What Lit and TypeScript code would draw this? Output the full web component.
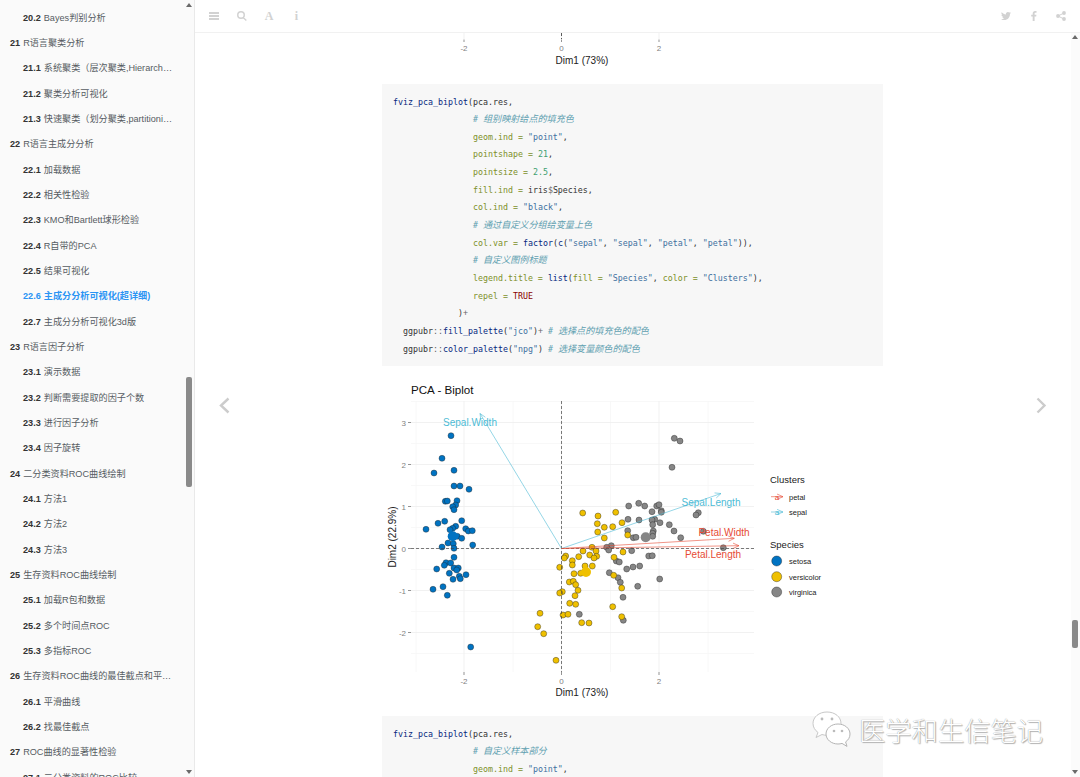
import { LitElement, html, css, svg } from 'lit';
import { customElement } from 'lit/decorators.js';

type Row = [string, string, number];

const toc: Row[] = [
  ['20.2', 'Bayes判别分析', 2],
  ['21', 'R语言聚类分析', 1],
  ['21.1', '系统聚类（层次聚类,Hierarchical clustering）', 2],
  ['21.2', '聚类分析可视化', 2],
  ['21.3', '快速聚类（划分聚类,partitioning clustering）', 2],
  ['22', 'R语言主成分分析', 1],
  ['22.1', '加载数据', 2],
  ['22.2', '相关性检验', 2],
  ['22.3', 'KMO和Bartlett球形检验', 2],
  ['22.4', 'R自带的PCA', 2],
  ['22.5', '结果可视化', 2],
  ['22.6', '主成分分析可视化(超详细)', 2],
  ['22.7', '主成分分析可视化3d版', 2],
  ['23', 'R语言因子分析', 1],
  ['23.1', '演示数据', 2],
  ['23.2', '判断需要提取的因子个数', 2],
  ['23.3', '进行因子分析', 2],
  ['23.4', '因子旋转', 2],
  ['24', '二分类资料ROC曲线绘制', 1],
  ['24.1', '方法1', 2],
  ['24.2', '方法2', 2],
  ['24.3', '方法3', 2],
  ['25', '生存资料ROC曲线绘制', 1],
  ['25.1', '加载R包和数据', 2],
  ['25.2', '多个时间点ROC', 2],
  ['25.3', '多指标ROC', 2],
  ['26', '生存资料ROC曲线的最佳截点和平滑曲线', 1],
  ['26.1', '平滑曲线', 2],
  ['26.2', '找最佳截点', 2],
  ['27', 'ROC曲线的显著性检验', 1],
  ['27.1', '二分类资料的ROC比较', 2],
];

// points read off the plot, in page pixels
const setosa = [
  [451, 435.7], [442, 458.3], [434, 473], [454, 470.3], [454, 486], [460, 486], [469, 489.3],
  [445.3, 501.3], [447.3, 501], [457, 500.7], [455.7, 505], [452.7, 506.7], [454, 509.7],
  [444.7, 521.3], [438, 523.3], [426, 529.3], [461.7, 520.7], [455.7, 526.3], [452.7, 528.3],
  [450, 529.7], [465.7, 528.7], [468.3, 531], [472.3, 530.7], [457.3, 536.3], [461.7, 538.3],
  [448, 543], [453.3, 543.7], [472.7, 545], [442, 547], [454, 548.3], [454, 557.3], [446, 562.7],
  [450.7, 563], [444.3, 565.3], [454, 568], [458.3, 568], [456.7, 570], [436.7, 569], [449.3, 573.3],
  [466, 574.7], [459.3, 576.3], [460.3, 578.7], [453, 579.3], [443, 586.7], [433, 589.3],
  [447.3, 595.3], [470.7, 647],
];
const versicolor = [
  [582.7, 513], [598, 516], [615.7, 512.3], [597.3, 523.7], [604.3, 527.3], [612.7, 526.7],
  [622, 522.7], [597.7, 532], [627.7, 535], [604.3, 538], [592, 547.3], [583, 551], [596, 551],
  [578.7, 556.7], [589.7, 555], [596.7, 556.3], [594, 558], [565.7, 556], [564.3, 558], [614, 557.3],
  [623, 552], [572.3, 560.7], [572.3, 565], [585, 566], [592.3, 566], [559.7, 567.3], [580.7, 573.3],
  [574, 573.7], [613.7, 575.3], [569.3, 582], [573.3, 581.3], [575.7, 584.7], [621.7, 588], [578, 590.3],
  [562.3, 591.7], [559.7, 593], [575, 595.7], [569.7, 603.3], [575.7, 604.3], [612.7, 606.7],
  [540, 613.3], [537.7, 626.7], [543.7, 633.7], [556, 660.3], [563, 615], [568, 614.3], [581.7, 622.7],
  [589, 623], [621.7, 616.7],
];
const virginica = [
  [674.3, 438.3], [680, 441], [672, 467.3], [628.7, 506], [638.7, 503.3], [644.7, 506], [656.7, 506],
  [659, 504.7], [652, 511.7], [661.3, 510.7], [661.3, 512.3], [628, 519.3], [639, 520], [654.7, 519.3],
  [652, 520], [660, 522.7], [652.7, 524.7], [669.3, 524.7], [698.3, 512.7], [696, 515], [627.7, 530.7],
  [674, 531], [653.3, 531], [652.7, 533.3], [703.3, 531.3], [633.3, 537.7], [636, 537.3], [652.7, 536.3],
  [680.7, 537.7], [611.3, 545.7], [606.7, 547.3], [608.7, 550], [631.7, 550.7], [723.3, 547.7],
  [648.7, 556], [652.3, 555.7], [616.3, 561], [619.3, 562], [626.7, 569], [633, 567], [639.7, 566],
  [609.3, 572.7], [618, 577.7], [620.3, 582.3], [637.7, 586.3], [659.7, 579], [623, 597.3], [579.3, 614.3],
  [623.3, 620.3],
];

const xMajor = [464, 561.5, 659];
const xMinor = [416, 513, 610.5, 708];
const yMajor = [422.5, 464.5, 506.5, 548.5, 590.5, 632.5];
const yMinor = [401.5, 443.5, 485.5, 527.5, 569.5, 611.5, 653.5];
const RED = '#e64b35';
const CYAN = '#4dbbd5';

function arrow(x1: number, y1: number, x2: number, y2: number, color: string) {
  const a = Math.atan2(y2 - y1, x2 - x1);
  const h = 6.5;
  const p1 = [x2 - h * Math.cos(a - 0.42), y2 - h * Math.sin(a - 0.42)];
  const p2 = [x2 - h * Math.cos(a + 0.42), y2 - h * Math.sin(a + 0.42)];
  return svg`<path d="M${x1} ${y1}L${x2} ${y2}M${p1[0]} ${p1[1]}L${x2} ${y2}L${p2[0]} ${p2[1]}" fill="none" stroke=${color} stroke-width="0.8" opacity="0.75"/>`;
}

function dots(pts: number[][], fill: string) {
  return pts.map(([x, y]) => svg`<circle cx=${x} cy=${y} r="3" fill=${fill} stroke="#222" stroke-width="0.4"/>`);
}

const codeBlock = [
  html`<div class="ln"><span class="f">fviz_pca_biplot</span>(pca.res,</div>`,
  html`<div class="ln">                <span class="c"># <span class="z">组别映射给点的填充色</span></span></div>`,
  html`<div class="ln">                <span class="a">geom.ind =</span> <span class="s">"point"</span>,</div>`,
  html`<div class="ln">                <span class="a">pointshape =</span> <span class="d">21</span>,</div>`,
  html`<div class="ln">                <span class="a">pointsize =</span> <span class="d">2.5</span>,</div>`,
  html`<div class="ln">                <span class="a">fill.ind =</span> iris<span class="o">$</span>Species,</div>`,
  html`<div class="ln">                <span class="a">col.ind =</span> <span class="s">"black"</span>,</div>`,
  html`<div class="ln">                <span class="c"># <span class="z">通过自定义分组给变量上色</span></span></div>`,
  html`<div class="ln">                <span class="a">col.var =</span> <span class="f">factor</span>(<span class="f">c</span>(<span class="s">"sepal"</span>, <span class="s">"sepal"</span>, <span class="s">"petal"</span>, <span class="s">"petal"</span>)),</div>`,
  html`<div class="ln">                <span class="c"># <span class="z">自定义图例标题</span></span></div>`,
  html`<div class="ln">                <span class="a">legend.title =</span> <span class="f">list</span>(<span class="a">fill =</span> <span class="s">"Species"</span>, <span class="a">color =</span> <span class="s">"Clusters"</span>),</div>`,
  html`<div class="ln">                <span class="a">repel =</span> <span class="k">TRUE</span></div>`,
  html`<div class="ln">             )<span class="o">+</span></div>`,
  html`<div class="ln">  ggpubr<span class="o">::</span><span class="f">fill_palette</span>(<span class="s">"jco"</span>)<span class="o">+</span> <span class="c"># <span class="z">选择点的填充色的配色</span></span></div>`,
  html`<div class="ln">  ggpubr<span class="o">::</span><span class="f">color_palette</span>(<span class="s">"npg"</span>) <span class="c"># <span class="z">选择变量颜色的配色</span></span></div>`,
];

const codeBlock2 = [
  html`<div class="ln"><span class="f">fviz_pca_biplot</span>(pca.res,</div>`,
  html`<div class="ln">                <span class="c"># <span class="z">自定义样本部分</span></span></div>`,
  html`<div class="ln">                <span class="a">geom.ind =</span> <span class="s">"point"</span>,</div>`,
  html`<div class="ln">                <span class="a">pointshape =</span> <span class="d">21</span>,</div>`,
];

@customElement('app-root')
export class AppRoot extends LitElement {
  static styles = css`
    :host {
      display: flex;
      position: relative;
      width: 1080px;
      height: 777px;
      overflow: hidden;
      background: #fff;
      font-family: "Liberation Sans", "Noto Sans CJK SC", sans-serif;
    }

    .sidebar {
      position: relative;
      flex: none;
      box-sizing: border-box;
      width: 195px;
      height: 777px;
      overflow: hidden;
      padding-top: 5.8px;
      background: #fafafa;
      border-right: 1px solid #e9e9e9;
    }
    .row {
      width: 173px;
      height: 25.33px;
      line-height: 25.33px;
      font-size: 9.15px;
      color: #565c62;
      white-space: nowrap;
      overflow: hidden;
      text-overflow: ellipsis;
      box-sizing: border-box;
    }
    .row b { color: #333; margin-right: 3px; }
    .lv1 { padding-left: 10px; }
    .lv2 { padding-left: 23px; }
    .row.on, .row.on b { color: #2a94f4; }
    .row.on { font-weight: bold; }

    .thumb {
      position: absolute;
      left: 186px;
      top: 377px;
      width: 6px;
      height: 110px;
      border-radius: 2px;
      background: #8a8a8a;
    }
    .tri {
      position: absolute;
      width: 0;
      height: 0;
      border-left: 3.5px solid transparent;
      border-right: 3.5px solid transparent;
    }
    .tri.up { border-bottom: 4px solid #6a6a6a; }
    .tri.down { border-top: 4px solid #6a6a6a; }

    .main {
      flex: 1;
      min-width: 0;
      height: 777px;
      overflow: hidden;
    }
    .toolbar {
      display: flex;
      align-items: center;
      box-sizing: border-box;
      height: 33px;
      padding: 0 5.25px;
      border-bottom: 1px solid #f1f1f1;
      color: #d2d2d2;
    }
    .tool {
      display: flex;
      justify-content: center;
      align-items: center;
      width: 27.5px;
      height: 32px;
      font: bold 12px "Liberation Serif", serif;
    }
    .tool svg { display: block; fill: #d2d2d2; }
    .spacer { flex: 1; }

    .column {
      width: 501px;
      margin-left: 187px;
    }
    .column svg { display: block; }
    .code {
      box-sizing: border-box;
      background: #f7f7f7;
      padding: 9.5px 11px 8px;
      height: 282px;
      font: 8.3px/17.67px "DejaVu Sans Mono", "Noto Sans CJK SC", monospace;
      color: #333;
    }
    .code.more { height: 90px; }
    .ln { white-space: pre; height: 17.67px; }
    .c { color: #60a0b0; font-style: italic; }
    .z { font-size: 9.1px; }
    .f { color: #06287e; }
    .a { color: #7d9029; }
    .s { color: #4070a0; }
    .d { color: #40a070; }
    .o { color: #666; }
    .k { color: #880000; }

    .chart text { font-family: "Liberation Sans", sans-serif; }

    .nav {
      position: absolute;
      top: 397px;
    }
    .nav path { fill: none; stroke: #cccccc; stroke-width: 2.4; }

    .maintrack {
      position: absolute;
      left: 1071px;
      top: 33px;
      width: 9px;
      height: 744px;
      background: #fbfbfb;
    }
    .mainbar {
      position: absolute;
      left: 1072px;
      top: 620px;
      width: 6px;
      height: 28px;
      border-radius: 2px;
      background: #8a8a8a;
    }

    .mark {
      position: absolute;
      left: 811px;
      top: 709px;
      display: flex;
      align-items: center;
      gap: 6px;
    }
    .mark span {
      font: 300 26.3px/42px "Noto Sans CJK SC", sans-serif;
      color: #fff;
      text-shadow: 0 0 1px #888, 1px 1px 1px #b4b4b4;
      white-space: nowrap;
    }
  `;

  render() {
    return html`
      <aside class="sidebar">
        ${toc.map(([n, label, lv]) => html`
          <div class="row lv${lv} ${n === '22.6' ? 'on' : ''}"><b>${n}</b>${label}</div>
        `)}
        <div class="thumb"></div>
        <div class="tri up" style="left:185.5px;top:3px"></div>
        <div class="tri down" style="left:185.5px;top:770px"></div>
      </aside>

      <div class="main">
        <header class="toolbar">
          <div class="tool"><svg width="10" height="8" viewBox="0 0 10 8"><path d="M0 0h10v2H0zM0 3h10v2H0zM0 6h10v2H0z"/></svg></div>
          <div class="tool"><svg width="10" height="10" viewBox="0 0 10 10"><path d="M4 0a4 4 0 1 1 0 8 4 4 0 0 1 0-8zm0 1.5a2.5 2.5 0 1 0 0 5 2.5 2.5 0 0 0 0-5zM6.6 6l3.2 3-.9 1-3.2-3z"/></svg></div>
          <div class="tool">A</div>
          <div class="tool">i</div>
          <div class="spacer"></div>
          <div class="tool"><svg width="10" height="10" viewBox="0 0 24 24"><path d="M23.95 4.57a10 10 0 0 1-2.82.78 4.96 4.96 0 0 0 2.16-2.72c-.95.55-2 .96-3.12 1.19a4.92 4.92 0 0 0-8.38 4.48C7.69 8.1 4.07 6.13 1.64 3.16a4.82 4.82 0 0 0-.67 2.48c0 1.71.87 3.21 2.19 4.1a4.9 4.9 0 0 1-2.23-.62v.06a4.92 4.92 0 0 0 3.95 4.83 5 5 0 0 1-2.21.08 4.94 4.94 0 0 0 4.6 3.42A9.87 9.87 0 0 1 0 19.54a14 14 0 0 0 7.56 2.21c9.05 0 14-7.5 14-13.98 0-.21 0-.42-.02-.63a9.94 9.94 0 0 0 2.46-2.55z"/></svg></div>
          <div class="tool"><svg width="6" height="10" viewBox="0 0 6 10"><path d="M1.7 10V5.5H.2V3.7h1.5V2.400C1.7.9 2.6 0 4 0h1.500v1.700h-1c-.7 0-.9.3-.9.9v1.100h1.800l-.2 1.800H3.600V10z"/></svg></div>
          <div class="tool"><svg width="10" height="10" viewBox="0 0 10 10"><circle cx="8" cy="2" r="1.900"/><circle cx="8" cy="8" r="1.900"/><circle cx="2" cy="5" r="1.900"/><path d="M2 5l6-3M2 5l6 3" stroke="#d2d2d2" stroke-width="1"/></svg></div>
        </header>

        <div class="column">
          ${this.renderTail()}
          <div class="code">${codeBlock}</div>
          ${this.renderChart()}
          <div class="code more">${codeBlock2}</div>
        </div>
      </div>

      <svg class="nav" style="left:218px" width="14" height="18" viewBox="0 0 14 18"><path d="M10.500 1.500L3 8.500l7.500 7"/></svg>
      <svg class="nav" style="left:1034px" width="14" height="18" viewBox="0 0 14 18"><path d="M3.500 1.500L10.500 8.500l-7 7"/></svg>

      <div class="maintrack"></div>
      <div class="mainbar"></div>
      <div class="tri up" style="left:1071.500px;top:35px"></div>
      <div class="tri down" style="left:1071.500px;top:770px"></div>

      <div class="mark">
        <svg width="42" height="40" viewBox="0 0 42 40">
          <path d="M16 2C8 2 2 7 2 13.500c0 3.600 2 6.800 5 9l-2 5 6-3c1.500.5 3.200.8 5 .8 8 0 14-5.200 14-11.800S24 2 16 2z" fill="#fff" stroke="#c8c8c8" stroke-width="1"/>
          <path d="M27 14c-6.600 0-12 4.400-12 10s5.400 10 12 10c1.400 0 2.700-.2 4-.6l5 3-1.400-4.500c2.700-1.800 4.400-4.600 4.400-7.900 0-5.600-5.400-10-12-10z" fill="#fff" stroke="#b4b4b4" stroke-width="1"/>
          <circle cx="11" cy="9" r="1.400" fill="#bbb"/><circle cx="21" cy="9" r="1.400" fill="#bbb"/>
          <circle cx="23" cy="21" r="1.300" fill="#bbb"/><circle cx="31" cy="21" r="1.300" fill="#bbb"/>
        </svg>
        <span>医学和生信笔记</span>
      </div>
    `;
  }

  // bottom of the previous figure, cut off by the toolbar
  renderTail() {
    return html`
      <svg class="chart" width="501" height="51" viewBox="382 33 501 51">
        ${xMajor.map(x => svg`<line x1=${x} x2=${x} y1="33" y2="39" stroke="#ededed" stroke-width="0.8"/>`)}
        <line x1="561.5" x2="561.5" y1="33" y2="39" stroke="#333" stroke-width="0.8" stroke-dasharray="3 2"/>
        ${xMajor.map((x, i) => svg`
          <line x1=${x} x2=${x} y1="39.500" y2="42" stroke="#666" stroke-width="0.7"/>
          <text x=${x} y="51" font-size="8" fill="#7f7f7f" text-anchor="middle">${['-2', '0', '2'][i]}</text>
        `)}
        <text x="582" y="63.500" font-size="10" fill="#222" text-anchor="middle">Dim1 (73%)</text>
      </svg>
    `;
  }

  renderChart() {
    return html`
      <svg class="chart" width="501" height="350" viewBox="382 366 501 350">
        <text x="411" y="394" font-size="11.6" fill="#111">PCA - Biplot</text>

        ${xMinor.map(x => svg`<line x1=${x} x2=${x} y1="401" y2="672" stroke="#f6f6f6" stroke-width="0.8"/>`)}
        ${yMinor.map(y => svg`<line x1="411" x2="754" y1=${y} y2=${y} stroke="#f6f6f6" stroke-width="0.8"/>`)}
        ${xMajor.map(x => svg`<line x1=${x} x2=${x} y1="401" y2="672" stroke="#eeeeee" stroke-width="0.8"/>`)}
        ${yMajor.map(y => svg`<line x1="411" x2="754" y1=${y} y2=${y} stroke="#eeeeee" stroke-width="0.8"/>`)}

        ${yMajor.map((y, i) => svg`
          <line x1="408" x2="411" y1=${y} y2=${y} stroke="#666" stroke-width="0.7"/>
          <text x="406" y=${y + 3} font-size="8" fill="#7f7f7f" text-anchor="end">${['3', '2', '1', '0', '-1', '-2'][i]}</text>
        `)}
        ${xMajor.map((x, i) => svg`
          <line x1=${x} x2=${x} y1="672" y2="675" stroke="#666" stroke-width="0.7"/>
          <text x=${x} y="684" font-size="8" fill="#7f7f7f" text-anchor="middle">${['-2', '0', '2'][i]}</text>
        `)}

        ${dots(setosa, '#0073c2')}
        ${dots(virginica, '#868686')}
        ${dots(versicolor, '#efc000')}
        <circle cx="452.700" cy="536.300" r="5" fill="#0073c2"/>
        <circle cx="586" cy="572" r="5" fill="#efc000"/>
        <circle cx="645.700" cy="537.300" r="5" fill="#868686"/>

        <line x1="561.5" x2="561.5" y1="401" y2="672" stroke="#444" stroke-width="0.7" stroke-dasharray="3 2"/>
        <line x1="411" x2="754" y1="548.5" y2="548.5" stroke="#444" stroke-width="0.7" stroke-dasharray="3 2"/>

        ${arrow(561.5, 548.5, 480, 413.5, CYAN)}
        ${arrow(561.5, 548.5, 721, 493.5, CYAN)}
        ${arrow(561.5, 548.5, 734.3, 538.3, RED)}
        ${arrow(561.5, 548.5, 739, 545.7, RED)}

        <text x="470" y="425.500" font-size="10" fill=${CYAN} text-anchor="middle">Sepal.Width</text>
        <text x="711" y="505.500" font-size="10" fill=${CYAN} text-anchor="middle">Sepal.Length</text>
        <text x="724" y="535.500" font-size="10" fill=${RED} text-anchor="middle">Petal.Width</text>
        <text x="713" y="557.500" font-size="10" fill=${RED} text-anchor="middle">Petal.Length</text>

        <text x="396" y="537" font-size="10" fill="#222" text-anchor="middle" transform="rotate(-90 396 537)">Dim2 (22.9%)</text>
        <text x="582" y="695.500" font-size="10" fill="#222" text-anchor="middle">Dim1 (73%)</text>

        <text x="770" y="483" font-size="9.500" fill="#222">Clusters</text>
        ${arrow(771, 496.7, 783, 496.7, RED)}
        ${arrow(771, 512, 783, 512, CYAN)}
        <text x="777" y="499.500" font-size="8" fill=${RED} text-anchor="middle">a</text>
        <text x="777" y="515" font-size="8" fill=${CYAN} text-anchor="middle">a</text>
        <text x="789" y="499.500" font-size="7.500" fill="#222">petal</text>
        <text x="789" y="515" font-size="7.500" fill="#222">sepal</text>

        <text x="770" y="547.500" font-size="9.500" fill="#222">Species</text>
        <circle cx="776.700" cy="561" r="5" fill="#0073c2" stroke="#222" stroke-width="0.4"/>
        <circle cx="776.700" cy="576.700" r="5" fill="#efc000" stroke="#222" stroke-width="0.4"/>
        <circle cx="776.700" cy="592" r="5" fill="#868686" stroke="#222" stroke-width="0.4"/>
        <text x="789" y="564" font-size="7.500" fill="#222">setosa</text>
        <text x="789" y="579.500" font-size="7.500" fill="#222">versicolor</text>
        <text x="789" y="595" font-size="7.500" fill="#222">virginica</text>
      </svg>
    `;
  }
}
